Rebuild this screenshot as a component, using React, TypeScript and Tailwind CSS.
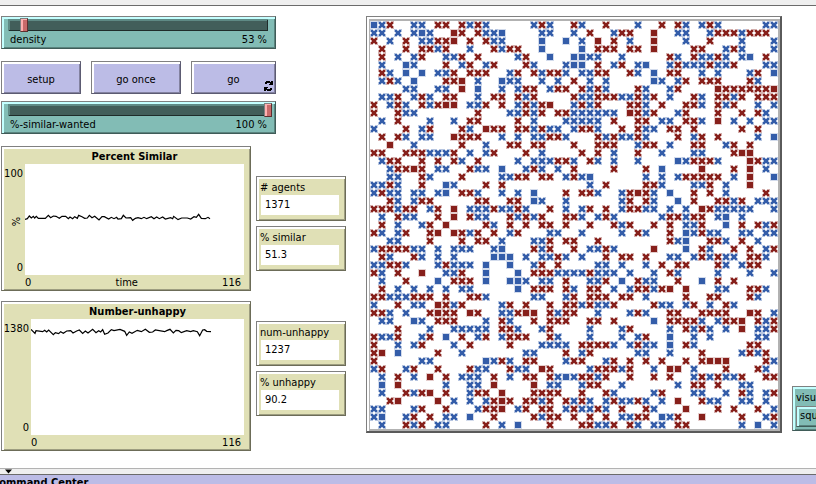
import type { ReactNode } from "react";

// One character per patch: b / r = unhappy agent (cross), B / R = happy agent (square).
const WORLD: string[] = [
  "Bbr..bb.rr.rbrb.." + "...brb..rb..r...b" + "..r.rb.brb.....bb",
  "bb.b.bBb..Rr.rbbB" + "....bb..b.r..brr." + ".R..bb..brrrbrrr.",
  "r.b.r.bbrrR.r.rbb" + "....B..B.b.R.r.b." + ".R...b..r...b...b",
  ".r..r.rrbr..b..rb" + "rr..B....B.rrr.rr" + ".R....rr..brb...b",
  ".r.b.br..bbr.r..." + ".br..B..BBbb..b.." + "...rb.rbbrb.bB.r.",
  ".b..Bb...r.br.br." + "..rb...bBB.r.br.b" + "B..brbbbrbbr...bb",
  ".rb.B.B.bbr.rrr.." + "br.rbrrb.bbrr..rb" + ".B.rr..b.b...br.B",
  ".brb.B...rrR.b..B" + "bb..b.b.r.b.b...." + ".Bb.br.rrr...rb..",
  "....bb..bb.R.B..b" + ".brr.brr.rbrb...r" + "b..br....RrrrrrrR",
  ".bbr.brb.rr..b.rr" + ".rbr....rbbrrrbbr" + "br.b..rb.rrbr.rrr",
  "r.brb.rbrRR.bbr.r" + ".brbrR..brbr...rr" + "b.r..rrb.rbr..b.b",
  "r..rbb.......r..." + "bbrbr.rrbbbbbb.Rr" + "br..br...r..r.rb.",
  ".b.r...b..b.rr..." + ".r.b...bbbbb.r..r" + "r.bb.rrb.R.b.b.bb",
  "b...r.br...rb.Rrr" + ".rrbrbb.brrb..r.r" + "bb.rr.r.....r.r..",
  ".r.rb.bb..Rrrr..b" + ".b.bbrrb...rbrbbr" + "b...r.br.r....b.B",
  "..R..b.....r..b.." + "rr.rr...r..rrr..b" + "rr.b..rr..br.r...",
  "rr..rrrbbbr.b.br." + "..r.b....r.r.b..r" + "..b...bb...rRR...",
  ".brr..r.r.rb.r..." + ".b.bbbrrb.rb.b..b" + "....Bbrrrb...Rrbb",
  "..brrRr.bb..rbb.B" + "..brb.b.r....r..." + "r.B....R...r.R.b.",
  "..bb..rb...r....b" + "brr.rr.brbB......" + "b.b.brrrrr.b.R..B",
  "bbrb..r..Bb...r.r" + "..........b.r...." + "rrb...bbr.b..R...",
  "brbb.bb.bB.rrb..b" + ".b.B...r.rrb..brR" + "rb.B..r.r.b....r.",
  "..rb.brr.....rr.." + "rr.Bb..b......br." + "rb..B.r..rrbr.bbb",
  "rrrbrr.br.R.bbbrb" + "brb..r.b.br.r.brr" + "bb.b.b.Rrbbbbb..b",
  ".b.rbb..r.R.rbb.." + "rbrbr..rrb.brb..." + "..brrbrr.bB.b....",
  ".r.b..br.R....rb." + "r.r.rr.r..r..rbr." + ".r.r.bbr..B.r.rbr",
  "rb.br..rR.Rrbr.r." + "br...bb..b....b.r" + "b..r.Bbrbb..bb.bb",
  "..bb...r...r.rr.b" + "...bbr.rr..r....." + "...rbB..rrb.r.b..",
  "brrrrbb.b.bbb..bB" + "...rbr..r.bbrb..." + ".R...B.rb..r.r.br",
  ".rb..rb.b.b....BB" + "B.b.bbrb.b..r.rr." + "r..bb.brbrbb.rrb.",
  "bbrrb...brbbb.B.." + "B..br.r....bb.b.." + "b.r.rr...rb.brr..",
  "rb.r..R..bbr..B.." + ".B.rrrbbbbrbbb.b." + ".b.rb....b...b..b",
  ".b..r...B.rrr.B.." + "BBb.bb.r..bbr.B.r" + "bb..r..B.r.r.....",
  ".r.b.b.b.b.bb...." + ".B.rrr.rb.rr.b.br" + "rbrR.R...bb..rrb.",
  "rrbbbrrr.r..rrb.." + "...bb..br.rrr.rr." + "b....r..rr...rb..",
  "b..r.bb.Rrbr....b" + "r.r..r.rrbrbbr..." + ".rbb.br.b.rb.....",
  "rrb.b..rRrr.Rr..b" + "brRR.rbrr..b...br" + "b..rr..rrrr..Rr.b",
  ".bb..Bb.rrr...b.r" + "b..r.rrr..rr.r..." + ".B.rrrrb.brrR.rbr",
  "...r...b..bbbbb.r" + "rb..br....b...br." + "...b.rbrb.b.R.bbr",
  "rbbr..br.B.r.br.b" + "rrr..rb...b...b.b" + "r..B..b.b.....bb.",
  "r..b.br...b.r...." + "r...bbbb.rrrrb.br" + "bb.B.rb......rr..",
  "rR.B....r..b....." + "..bb...r.br.....b" + "b..b...r....brbr.",
  "r.....bb......Bbr" + "b.rr...brr..br.r." + "r.r..r.rRRR....rb",
  "br..br..r...rbb.." + "rbb.Rr....brrrbr." + ".b.RR.b...r...rb.",
  ".b.r.b.R.r.bbb.r." + "b.rr.rbBbrrbr..r." + ".r.r..brbrbbr..rr",
  ".B.R.....b..bb.R." + "...R.bb..brr..b.." + "....b.rr.r..bb...",
  ".b..rbrR.r..brr.R" + "...rrrr..r..rb..." + ".br...bb..b.rb.br",
  "..rR....R.b.b.brR" + "r.rrbr.rbrb.brbbr" + "b.b.R..rbb..bb.b.",
  "bb...br..r...brrR" + ".br.rr.brbbrb.r.." + "rb...R...r.r..r.b",
  "bB..br.r.bb.B..r." + "...rbrr.r.r.r.bbr" + "r.Bbr..R....r..br",
  ".b..rbr.bb....r.b" + ".B...r...rrbbr.rb" + ".bb.rr......b.B.b",
];

const SIMILAR =
  "75,238 82,236 88,228 94,234 100,229 104,234 109,229 115,235 136,235 145,226 152,233 160,228 168,229 178,235 186,229 197,229 205,236 210,231 218,236 224,230 232,235 236,226 246,230 254,235 262,234 268,226 276,233 284,229 297,240 306,230 313,230 326,237 334,232 342,236 350,232 354,237 364,236 370,226 378,234 392,233 398,241 406,235 414,233 424,236 432,232 440,236 454,230 462,236 470,231 478,236 488,231 496,237 512,233 518,236 521,229 534,239 545,234 562,234 572,237 582,230 589,232 596,223 604,235 616,236 624,232 630,236";
const UNHAPPY =
  "93,100 105,112 108,104 128,107 134,103 140,108 146,102 160,116 166,110 176,113 182,107 190,112 200,105 212,104 219,111 230,105 238,102 248,112 256,105 264,111 278,100 288,110 296,104 302,108 308,101 314,115 324,111 334,101 342,104 360,100 374,106 380,118 388,108 396,112 412,103 424,107 436,100 448,109 458,108 466,102 494,107 500,104 510,100 520,111 528,103 536,104 544,110 560,104 572,107 580,104 592,107 599,119 608,102 614,101 620,106 633,107";

function World() {
  return (
    <svg viewBox="0 0 408 408" className="block h-[408px] w-[408px] bg-white" role="img" aria-label="Agents">
      <defs>
        <path id="cross" d="M1 1h2v1h2v-1h2v2h-1v2h1v2h-2v-1h-2v1h-2v-2h1v-2h-1z" />
        <path id="cross-edge" d="M0 0h3v1h2v-1h3v3h-1v2h1v3h-3v-1h-2v1h-3v-3h1v-2h-1z" />
        <path id="halo" d="M0 0h8v8h-8z" />
        <path id="square" d="M1 1h6v6h-6z" />
      </defs>
      {WORLD.map((row, y) =>
        row.split("").map((c, x) => {
          if (c === ".") return null;
          const fill = c.toLowerCase() === "b" ? "#345da9" : "#87201b";
          const happy = c === "B" || c === "R";
          return (
            <g key={`${x}-${y}`} transform={`translate(${x * 8} ${y * 8})`} fill={fill}>
              {happy ? (
                <>
                  <use href="#halo" opacity="0.22" />
                  <use href="#square" />
                </>
              ) : (
                <>
                  <use href="#cross-edge" opacity="0.36" />
                  <use href="#cross" />
                </>
              )}
            </g>
          );
        }),
      )}
    </svg>
  );
}

function Slider(props: { id: string; label: string; value: number; min: number; max: number }) {
  return (
    <div className="h-[33px] w-[275px] border border-t-[#808080] border-l-[#808080] border-r-[#3f5c58] border-b-[#3f5c58] bg-[#82bcb5] pt-[2px] pr-[7px] pl-[6px] shadow-[inset_2px_2px_0_#c4ffff,inset_-1px_-1px_0_#5a837e]">
      <div className="h-[12px] border-t border-l border-[#5f8a85] bg-[#425e5a] shadow-[inset_-1px_-1px_0_#1f2c2a,inset_1px_1px_0_#5f8a85]">
        <input
          id={props.id}
          type="range"
          min={props.min}
          max={props.max}
          defaultValue={props.value}
          className="-mt-[2px] -ml-[5px] block h-[14px] w-[268px] appearance-none bg-transparent [&::-webkit-slider-thumb]:h-[14px] [&::-webkit-slider-thumb]:w-[8px] [&::-webkit-slider-thumb]:appearance-none [&::-webkit-slider-thumb]:border [&::-webkit-slider-thumb]:border-t-[#808080] [&::-webkit-slider-thumb]:border-r-[#5f2f2f] [&::-webkit-slider-thumb]:border-b-[#5f2f2f] [&::-webkit-slider-thumb]:border-l-[#808080] [&::-webkit-slider-thumb]:bg-[#c96a6a] [&::-webkit-slider-thumb]:shadow-[inset_2px_1px_0_#ffb0b0]"
        />
      </div>
      <div className="flex justify-between pr-px pl-[2px] leading-[17px]">
        <label htmlFor={props.id}>{props.label}</label>
        <output htmlFor={props.id}>{props.value} %</output>
      </div>
    </div>
  );
}

function CommandButton({ children, className }: { children: ReactNode; className: string }) {
  return (
    <button
      type="button"
      className={`h-[33px] border border-t-[#808080] border-l-[#808080] border-r-[#5c5b72] border-b-[#5c5b72] bg-[#bcbce6] pt-[7px] pb-[2px] shadow-[inset_2px_2px_0_#ffffff,inset_-1px_-1px_0_#8382a0] ${className}`}
    >
      {children}
    </button>
  );
}

const PANEL =
  "border border-t-[#808080] border-l-[#808080] border-r-[#6c6c58] border-b-[#6c6c58] bg-[#e0e0b6] shadow-[inset_2px_2px_0_#ffffff,inset_-1px_-1px_0_#9d9d80]";

function Monitor({ label, value }: { label: string; value: string }) {
  return (
    <div className={`h-[45px] w-[90px] pt-[3px] pr-[6px] pl-[4px] ${PANEL}`}>
      <div className="-ml-px leading-[15px] whitespace-nowrap">{label}</div>
      <output aria-label={label} className="block h-[20px] bg-white px-[4px] leading-[20px]">
        {value}
      </output>
    </div>
  );
}

function Plot(props: {
  title: string;
  top: string;
  yName?: string;
  xName?: string;
  points: string;
  viewBox: string;
  size: string;
}) {
  const inset = props.yName ? "pl-[20px]" : "pl-[26px]";
  return (
    <section className={`flex w-[250px] flex-col pt-[2px] pr-[6px] pl-[3px] ${props.size} ${PANEL}`}>
      <h2 className={`text-center leading-[15px] font-bold ${inset}`}>{props.title}</h2>
      <div className="flex min-h-0 flex-1">
        <div className="flex min-w-0 flex-1 flex-col items-end justify-between pt-[3px] pr-[2px] leading-[14px]">
          <span>{props.top}</span>
          {props.yName && <span className="-rotate-90 pb-[3px]">{props.yName}</span>}
          <span>0</span>
        </div>
        <svg
          viewBox={props.viewBox}
          preserveAspectRatio="none"
          className={`h-full shrink-0 bg-white ${props.yName ? "w-[219px]" : "w-[213px]"}`}
        >
          <polyline points={props.points} fill="none" stroke="#000" strokeWidth="3.6" />
        </svg>
      </div>
      <div className={`flex justify-between pr-[3px] leading-[15px] ${inset}`}>
        <span>0</span>
        <span>{props.xName}</span>
        <span>116</span>
      </div>
    </section>
  );
}

export default function App() {
  return (
    <div className="flex h-screen flex-col overflow-hidden bg-white font-['DejaVu_Sans_Condensed','DejaVu_Sans',sans-serif] text-[11px] text-black">
      <header className="h-[6px] shrink-0 border-b border-[#6b6b6b] bg-[#efefef]" />
      <main className="flex min-h-0 flex-1 items-start overflow-hidden pt-[10px] pl-px">
        <div className="flex w-[345px] shrink-0 flex-col">
          <Slider id="density" label="density" value={53} min={50} max={99} />
          <div className="mt-[12px] mb-[7px] flex gap-[10px]">
            <CommandButton className="w-[80px]">setup</CommandButton>
            <CommandButton className="w-[90px]">go once</CommandButton>
            <CommandButton className="relative w-[85px]">
              go
              <svg viewBox="0 0 9 10" className="absolute right-[2px] bottom-[2px] h-[10px] w-[9px]" fill="#000">
                <path d="M1 1h1V0h4v1h1V0h2v4H5V3h1V2H3v1H1zM8 9H7v1H3V9H2v1H0V6h4v1H3v1h3V7h2z" />
              </svg>
            </CommandButton>
          </div>
          <Slider id="similar-wanted" label="%-similar-wanted" value={100} min={0} max={100} />
          <div className="mt-[12px] flex items-center gap-[5px]">
            <Plot
              title="Percent Similar"
              top="100"
              yName="%"
              xName="time"
              points={SIMILAR}
              viewBox="75 72 657 333"
              size="h-[145px]"
            />
            <div className="flex flex-col gap-[5px] pt-[10px]">
              <Monitor label="# agents" value="1371" />
              <Monitor label="% similar" value="51.3" />
            </div>
          </div>
          <div className="mt-[10px] flex items-start gap-[5px]">
            <Plot title="Number-unhappy" top="1380" points={UNHAPPY} viewBox="93 69 639 348" size="h-[150px]" />
            <div className="flex flex-col gap-[5px] pt-[20px]">
              <Monitor label="num-unhappy" value="1237" />
              <Monitor label="% unhappy" value="90.2" />
            </div>
          </div>
        </div>
        <div className="ml-[20px] shrink-0 border-t border-r-2 border-b-2 border-l border-t-[#808080] border-r-[#5a5a5a] border-b-[#5a5a5a] border-l-[#808080] bg-white pt-[2px] pl-[2px]">
          <div className="border-t-2 border-r-2 border-b-2 border-l border-[#b2b2b2]">
            <World />
          </div>
        </div>
        <div className="mt-[370px] ml-[10px] h-[45px] w-[130px] shrink-0 border border-t-[#808080] border-l-[#808080] border-r-[#3f5c58] border-b-[#3f5c58] bg-[#82bcb5] pt-[3px] pl-[3px] shadow-[inset_2px_2px_0_#c4ffff,inset_-1px_-1px_0_#5a837e]">
          <label htmlFor="visualization" className="block leading-4">
            visualization
          </label>
          <select
            id="visualization"
            className="block h-[21px] w-[120px] appearance-none border border-t-[#808080] border-r-[#3f5c58] border-b-[#3f5c58] border-l-[#808080] bg-[#82bcb5] pl-[3px] shadow-[inset_2px_2px_0_#c4ffff,inset_-1px_-1px_0_#5a837e]"
          >
            <option>square-x</option>
          </select>
        </div>
      </main>
      <footer className="h-[16px] shrink-0 overflow-hidden border-t border-[#b2b2b2]">
        <div className="h-[6px] border-b border-[#6b6b6b] bg-[#efefef]">
          <svg viewBox="0 0 7 4" className="ml-[5px] block h-[5px] w-[7px]">
            <path d="M0 0h7L3.500 4z" />
          </svg>
        </div>
        <h2 className="-ml-[8px] h-[20px] bg-[#bcbce6] leading-[15px] font-bold">Command Center</h2>
      </footer>
    </div>
  );
}
